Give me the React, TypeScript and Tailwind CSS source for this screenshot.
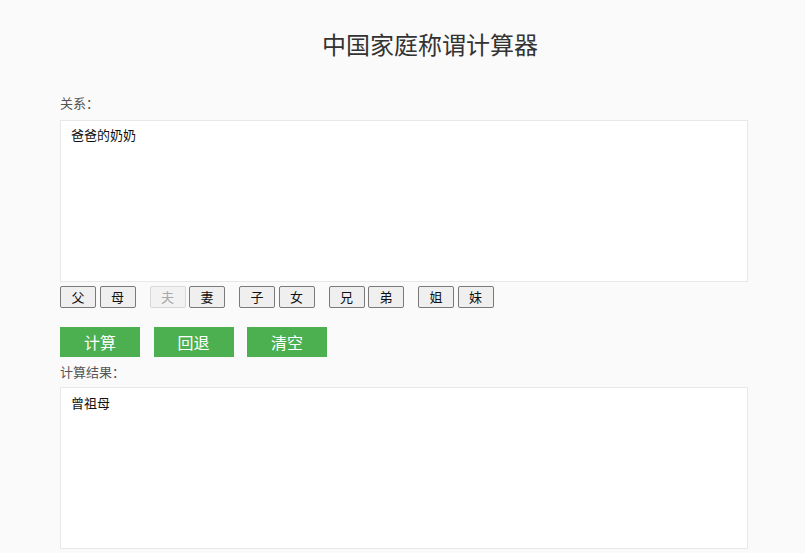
import * as React from "react";

const groups: { label: string; disabled?: boolean }[][] = [
  [{ label: "父" }, { label: "母" }],
  [{ label: "夫", disabled: true }, { label: "妻" }],
  [{ label: "子" }, { label: "女" }],
  [{ label: "兄" }, { label: "弟" }],
  [{ label: "姐" }, { label: "妹" }],
];

export default function App() {
  return (
    <div
      className="min-h-[553px] w-full bg-[#fafafa] text-[#333]"
      style={{ fontFamily: '"Noto Sans CJK SC", "Noto Sans", sans-serif' }}
    >
      <div className="w-[688px] ml-[60px] pt-[28px]">
        <h1 className="pl-[262px] text-[24px] leading-[32px] text-[#333]">中国家庭称谓计算器</h1>

        {/* Relation input */}
        <div className="mt-[34px] text-[13px] leading-[18px] text-[#555]">关系：</div>
        <div className="mt-[8px] h-[162px] bg-white border border-[#e8e8e8] px-[10px] pt-[4px] text-[13px] leading-[20px] text-[#111]">
          爸爸的奶奶
        </div>

        {/* Relation keys */}
        <div className="mt-[4px] flex gap-[14px]">
          {groups.map((g, i) => (
            <div key={i} className="flex gap-[3.5px]">
              {g.map((b) => (
                <button
                  key={b.label}
                  disabled={b.disabled}
                  className={
                    b.disabled
                      ? "w-[36px] h-[22px] text-[13px] leading-[20px] rounded-[2px] border border-[#d8d8d8] bg-[#f2f2f2] text-[#a8a8a8]"
                      : "w-[36px] h-[22px] text-[13px] leading-[20px] rounded-[2px] border border-[#7a7a7a] bg-[#efefef] text-[#111]"
                  }
                >
                  {b.label}
                </button>
              ))}
            </div>
          ))}
        </div>

        {/* Actions */}
        <div className="mt-[19px] flex gap-[13.5px]">
          {["计算", "回退", "清空"].map((t) => (
            <button key={t} className="w-[80px] h-[30px] bg-[#4caf50] text-white text-[16px] leading-[30px]">
              {t}
            </button>
          ))}
        </div>

        {/* Result */}
        <div className="mt-[6px] text-[13px] leading-[18px] text-[#555]">计算结果：</div>
        <div className="mt-[6px] h-[162px] bg-white border border-[#e8e8e8] px-[10px] pt-[5px] text-[13px] leading-[20px] text-[#111]">
          曾祖母
        </div>
      </div>
    </div>
  );
}
